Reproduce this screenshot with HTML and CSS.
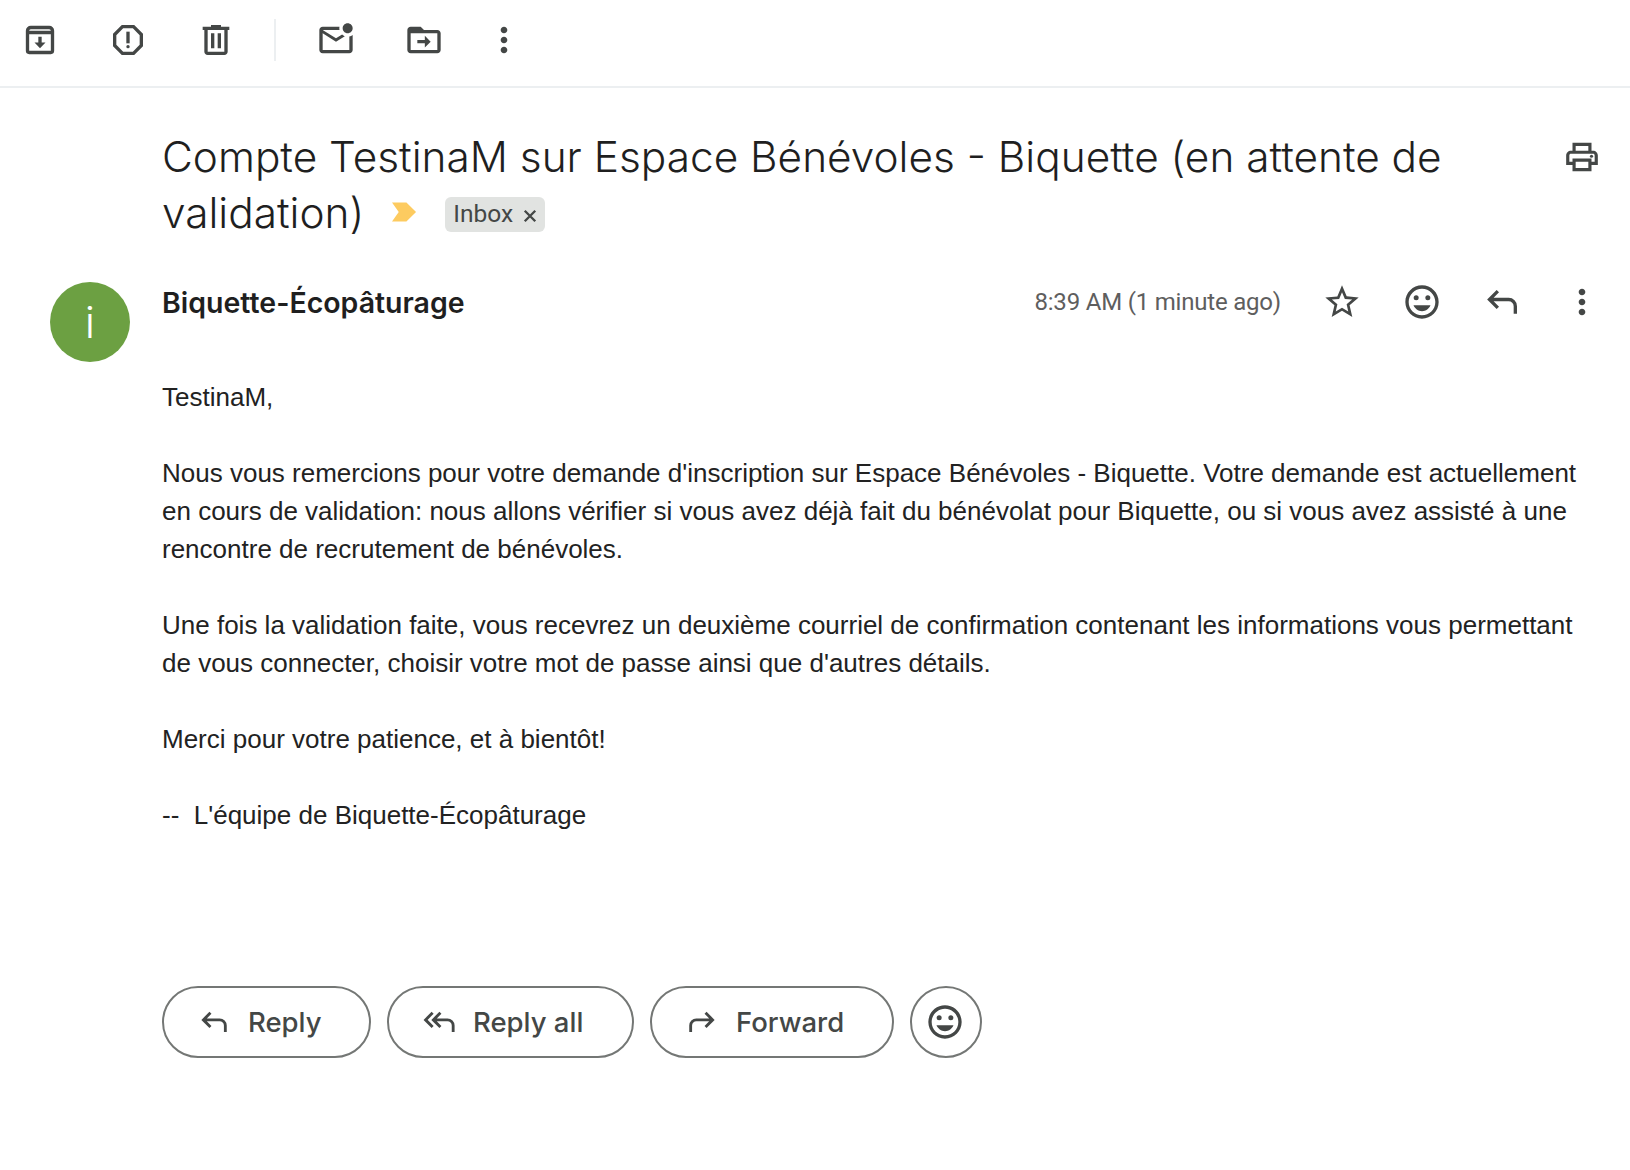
FILE: index.html
```html
<!DOCTYPE html>
<html lang="fr">
<head>
<meta charset="utf-8" />
<title>Compte TestinaM sur Espace Bénévoles - Biquette</title>
<link rel="stylesheet" href="styles.css">
</head>
<body>
<div class="toolbar">
	<svg class="tool" viewBox="0 0 24 24"><path class="line" d="M4.5 8V18.5a1 1 0 0 0 1 1h13a1 1 0 0 0 1-1V8M4.5 7.500V6.500a2 2 0 0 1 2-2h11a2 2 0 0 1 2 2v1zM4.500 7.500h15"/><path d="M11 10h2v3.500h2.300L12 17l-3.300-3.500H11z"/></svg>
	<svg class="tool" viewBox="0 0 24 24"><path d="M15.73 3H8.27L3 8.27v7.46L8.27 21h7.46L21 15.73V8.27L15.73 3zM19 14.9L14.9 19H9.1L5 14.9V9.1L9.1 5h5.8L19 9.1v5.8z"/><circle cx="12" cy="16" r="1"/><path d="M11 7h2v7h-2z"/></svg>
	<svg class="tool" viewBox="0 0 24 24"><path d="M15 4V3H9v1H4v2h1v13c0 1.1.9 2 2 2h10c1.1 0 2-.9 2-2V6h1V4h-5zm2 15H7V6h10v13zM9 8h2v9H9zm4 0h2v9h-2z"/></svg>
	<span class="sep"></span>
	<svg class="tool" viewBox="0 0 24 24"><path d="M22 8.98V18c0 1.1-.9 2-2 2H4c-1.1 0-2-.9-2-2V6c0-1.1.9-2 2-2h10.1c-.06.32-.1.66-.1 1 0 .34.04.68.1 1H4l8 5 3.67-2.29c.47.43 1.02.76 1.63.98L12 13 4 8v10h16V9.9c.74-.15 1.42-.48 2-.92zM16 5c0 1.66 1.34 3 3 3s3-1.34 3-3-1.34-3-3-3-3 1.34-3 3z"/></svg>
	<svg class="tool tool-move" viewBox="0 0 24 24"><path fill-rule="evenodd" d="M20 6h-8l-2-2H4c-1.100 0-1.990.9-1.990 2L2 18c0 1.100.9 2 2 2h16c1.100 0 2-.9 2-2V8c0-1.100-.9-2-2-2zm0 12H4V8h16v10zM12.500 9.500l3.500 3.500-3.500 3.500v-2.500H8v-2h4.500z"/></svg>
	<svg class="tool" viewBox="0 0 24 24"><path d="M12 8c1.100 0 2-.9 2-2s-.9-2-2-2-2 .9-2 2 .9 2 2 2zm0 2c-1.100 0-2 .9-2 2s.9 2 2 2 2-.9 2-2-.9-2-2-2zm0 6c-1.100 0-2 .9-2 2s.9 2 2 2 2-.9 2-2-.9-2-2-2z"/></svg>
</div>

<div class="subject">
	<h1 class="title">
		<span class="title-line">Compte TestinaM sur Espace Bénévoles - Biquette (en attente de</span>
		<span class="title-line title-last">
			<span>validation)</span>
			<svg class="marker" viewBox="0 0 26 20"><path d="M0 0h15l10 10-10 10H0l7-10z"/></svg>
			<span class="label"><span>Inbox</span><svg class="x" viewBox="0 0 12 12"><path d="M1.500 1.500l9 9M10.500 1.500l-9 9"/></svg></span>
		</span>
	</h1>
	<svg class="print" viewBox="0 0 24 24"><path d="M19 8h-1V3H6v5H5c-1.660 0-3 1.340-3 3v6h4v4h12v-4h4v-6c0-1.660-1.340-3-3-3zM8 5h8v3H8V5zm8 14H8v-4h8v4zm2-4v-2H6v2H4v-4c0-.55.45-1 1-1h14c.55 0 1 .45 1 1v4h-2z"/><circle cx="18" cy="11.500" r="1"/></svg>
</div>

<div class="msg">
	<div class="avatar">i</div>
	<div class="main">
		<div class="from">
			<span class="name">Biquette-Écopâturage</span>
			<span class="time">8:39 AM (1 minute ago)</span>
			<svg class="act" viewBox="0 0 24 24"><path d="M22 9.240l-7.190-.62L12 2 9.190 8.630 2 9.240l5.460 4.730L5.820 21 12 17.270 18.180 21l-1.630-7.030L22 9.240zM12 15.400l-3.760 2.270 1-4.280-3.320-2.880 4.380-.38L12 6.100l1.710 4.040 4.380.38-3.320 2.880 1 4.280L12 15.400z"/></svg>
			<svg class="act" viewBox="0 0 24 24"><path d="M11.990 2C6.470 2 2 6.480 2 12s4.470 10 9.990 10C17.520 22 22 17.520 22 12S17.520 2 11.990 2zM12 20c-4.420 0-8-3.580-8-8s3.580-8 8-8 8 3.580 8 8-3.580 8-8 8z"/><circle cx="15.500" cy="9.500" r="1.500"/><circle cx="8.500" cy="9.500" r="1.500"/><path d="M12 17.500c2.330 0 4.300-1.460 5.110-3.500H6.890c.81 2.040 2.780 3.500 5.110 3.500z"/></svg>
			<svg class="act" viewBox="0 0 24 24"><path class="line" d="M20 19v-4.500a4 4 0 0 0-4-4H4.500M9.500 5.500l-5 5 5 5"/></svg>
			<svg class="act" viewBox="0 0 24 24"><path d="M12 8c1.100 0 2-.9 2-2s-.9-2-2-2-2 .9-2 2 .9 2 2 2zm0 2c-1.100 0-2 .9-2 2s.9 2 2 2 2-.9 2-2-.9-2-2-2zm0 6c-1.100 0-2 .9-2 2s.9 2 2 2 2-.9 2-2-.9-2-2-2z"/></svg>
		</div>
		<div class="text">
			<p>TestinaM,</p>
			<p>Nous vous remercions pour votre demande d'inscription sur Espace Bénévoles - Biquette. Votre demande est actuellement<br>en cours de validation: nous allons vérifier si vous avez déjà fait du bénévolat pour Biquette, ou si vous avez assisté à une<br>rencontre de recrutement de bénévoles.</p>
			<p>Une fois la validation faite, vous recevrez un deuxième courriel de confirmation contenant les informations vous permettant<br>de vous connecter, choisir votre mot de passe ainsi que d'autres détails.</p>
			<p>Merci pour votre patience, et à bientôt!</p>
			<p>--&nbsp; L'équipe de Biquette-Écopâturage</p>
		</div>
		<div class="buttons">
			<a class="btn btn-reply"><svg viewBox="0 0 24 24"><path class="line" d="M20 19v-4.500a4 4 0 0 0-4-4H4.500M9.500 5.500l-5 5 5 5"/></svg>Reply</a>
			<a class="btn btn-all"><svg viewBox="0 0 24 24"><path class="line" d="M22 19v-4.500a4 4 0 0 0-4-4H9M13 5.500l-5 5 5 5M7.500 5.500l-5 5 5 5"/></svg>Reply all</a>
			<a class="btn btn-fwd"><svg viewBox="0 0 24 24"><path class="line" d="M4 19v-4.500a4 4 0 0 1 4-4h11.500M14.500 5.500l5 5-5 5"/></svg>Forward</a>
			<a class="btn btn-emoji"><svg viewBox="0 0 24 24"><path d="M11.990 2C6.470 2 2 6.480 2 12s4.470 10 9.990 10C17.520 22 22 17.520 22 12S17.520 2 11.990 2zM12 20c-4.420 0-8-3.580-8-8s3.580-8 8-8 8 3.580 8 8-3.580 8-8 8z"/><circle cx="15.500" cy="9.500" r="1.500"/><circle cx="8.500" cy="9.500" r="1.500"/><path d="M12 17.500c2.330 0 4.300-1.460 5.110-3.500H6.890c.81 2.040 2.780 3.500 5.110 3.500z"/></svg></a>
		</div>
	</div>
</div>
</body>
</html>
```

FILE: styles.css
```css
* {box-sizing:border-box;}
html,body {margin:0;padding:0;background:#fff;}
body {color:#202124;font-family:"Liberation Sans",Arial,sans-serif;overflow:hidden;}
svg {fill:#444746;flex:none;}
.line {fill:none;stroke:#444746;stroke-width:2;}

.toolbar {display:flex;align-items:center;height:88px;padding:0 0 6px 20px;border-bottom:2px solid #eceff1;}
.tool {width:40px;height:40px;margin-right:48px;}
.tool-move {margin-right:40px;}
.sep {width:2px;height:42px;background:#eceff1;margin:0 40px 0 -10px;}

.subject {display:flex;justify-content:space-between;padding:41px 29px 0 162px;}
.title {margin:0;font-family:Inter,sans-serif;font-weight:350;font-size:42.35px;line-height:56px;color:#1f1f1f;white-space:nowrap;}
.title-line {display:block;}
.title-last {display:flex;align-items:center;}
.marker {width:25px;height:20px;fill:#fdcb60;margin:-2px 28px 0 28px;}
.label {display:flex;align-items:center;height:35px;margin-top:2px;padding:0 8px;background:#e1e3e1;border-radius:6px;font-family:Roboto,sans-serif;font-weight:400;font-size:24.5px;color:#444746;}
.x {width:14px;height:14px;margin:3px 0 0 10px;fill:none;stroke:#444746;stroke-width:2;}
.print {width:38px;height:38px;margin-top:9px;}

.msg {display:flex;padding:41px 0 0 50px;}
.avatar {flex:none;width:80px;height:80px;border-radius:50%;background:#6ca042;color:#fff;font-family:Inter,sans-serif;font-size:44px;font-weight:300;line-height:80px;text-align:center;}
.main {flex:1;margin-left:32px;padding-right:28px;}
.from {display:flex;align-items:center;height:40px;}
.name {font-family:Inter,sans-serif;font-weight:600;font-size:28.5px;color:#1f1f1f;margin-right:auto;}
.time {font-family:Roboto,sans-serif;font-size:24px;letter-spacing:-.2px;color:#5e5e5e;margin-right:41px;}
.act {width:40px;height:40px;margin-left:40px;}
.time + .act {margin-left:0;}

.text {margin-top:56px;font-size:26px;line-height:38px;color:#222;}
.text p {margin:0 0 38px 0;}

.buttons {display:flex;gap:16px;margin-top:152px;}
.btn {display:flex;align-items:center;height:72px;border:2px solid #747775;border-radius:36px;padding-left:33px;font-family:Inter,sans-serif;font-weight:500;font-size:27.5px;color:#444746;}
.btn svg {width:34px;height:34px;margin-right:17px;}
.btn-reply {width:209px;}
.btn-all {width:247px;}
.btn-fwd {width:244px;}
.btn-emoji {width:72px;padding:0 2px 0 0;justify-content:center;}
.btn-emoji svg {width:40px;height:40px;margin:0;}
```
